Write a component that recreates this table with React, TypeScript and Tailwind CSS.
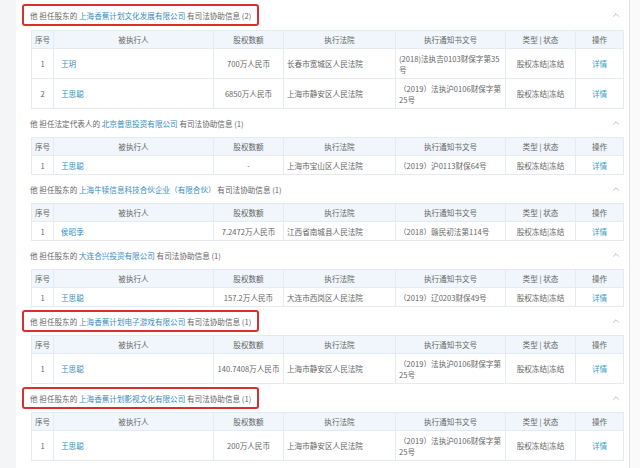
import { ChevronUp } from "lucide-react"

interface Row {
  no: number
  person: string
  amount: string
  court: string
  doc: string
  status: string
}

interface Section {
  role: string
  company: string
  count: number
  marked?: boolean
  rows: Row[]
}

const sections: Section[] = [
  {
    role: "他 担任股东的",
    company: "上海香蕉计划文化发展有限公司",
    count: 2,
    marked: true,
    rows: [
      { no: 1, person: "王玥", amount: "700万人民币", court: "长春市宽城区人民法院", doc: "(2018)法执吉0103财保字第35号", status: "股权冻结|冻结" },
      { no: 2, person: "王思聪", amount: "6850万人民币", court: "上海市静安区人民法院", doc: "（2019）法执沪0106财保字第25号", status: "股权冻结|冻结" },
    ],
  },
  {
    role: "他 担任法定代表人的",
    company: "北京普思投资有限公司",
    count: 1,
    rows: [
      { no: 1, person: "王思聪", amount: "-", court: "上海市宝山区人民法院", doc: "（2019）沪0113财保64号", status: "股权冻结|冻结" },
    ],
  },
  {
    role: "他 担任股东的",
    company: "上海牛犊信息科技合伙企业（有限合伙）",
    count: 1,
    rows: [
      { no: 1, person: "侯昭季", amount: "7.2472万人民币", court: "江西省南城县人民法院", doc: "（2018）赣民初法第114号", status: "股权冻结|冻结" },
    ],
  },
  {
    role: "他 担任股东的",
    company: "大连合兴投资有限公司",
    count: 1,
    rows: [
      { no: 1, person: "王思聪", amount: "157.2万人民币", court: "大连市西岗区人民法院", doc: "（2019）辽0203财保49号", status: "股权冻结|冻结" },
    ],
  },
  {
    role: "他 担任股东的",
    company: "上海香蕉计划电子游戏有限公司",
    count: 1,
    marked: true,
    rows: [
      { no: 1, person: "王思聪", amount: "140.7408万人民币", court: "上海市静安区人民法院", doc: "（2019）法执沪0106财保字第25号", status: "股权冻结|冻结" },
    ],
  },
  {
    role: "他 担任股东的",
    company: "上海香蕉计划影视文化有限公司",
    count: 1,
    marked: true,
    rows: [
      { no: 1, person: "王思聪", amount: "200万人民币", court: "上海市静安区人民法院", doc: "（2019）法执沪0106财保字第25号", status: "股权冻结|冻结" },
    ],
  },
]

function SectionTable({ section, first }: { section: Section; first: boolean }) {
  return (
    <div>
      {/* Heading */}
      <div className={`flex items-center justify-between pl-[14px] pr-[8px] ${first ? "h-[30px]" : "h-[28px]"}`}>
        <span className="relative whitespace-nowrap text-[#666]">
          {section.role}{" "}
          <span className="text-[#3a8cc4]">{section.company}</span>{" "}
          有司法协助信息 ({section.count})
          {section.marked && (
            <span className="absolute -left-[8px] -right-[8px] -top-[6px] -bottom-[5px] rounded-[3px] border-2 border-[#d8302f]" />
          )}
        </span>
        <ChevronUp className="w-[10px] h-[10px] text-[#999]" strokeWidth={1.5} />
      </div>

      {/* Table */}
      <table className="ml-[15px] w-[592px] table-fixed border-collapse border border-[#e6ebf0]">
        <colgroup>
          <col className="w-[22px]" />
          <col className="w-[160px]" />
          <col className="w-[70px]" />
          <col className="w-[112px]" />
          <col className="w-[110px]" />
          <col className="w-[70px]" />
          <col className="w-[48px]" />
        </colgroup>
        <thead>
          <tr className="h-[18px] bg-[#f0f6fb] text-[#666]">
            <th className="font-normal border border-[#e6ebf0]">序号</th>
            <th className="font-normal border border-[#e6ebf0]">被执行人</th>
            <th className="font-normal border border-[#e6ebf0]">股权数额</th>
            <th className="font-normal border border-[#e6ebf0]">执行法院</th>
            <th className="font-normal border border-[#e6ebf0]">执行通知书文号</th>
            <th className="font-normal border border-[#e6ebf0]">类型 | 状态</th>
            <th className="font-normal border border-[#e6ebf0]">操作</th>
          </tr>
        </thead>
        <tbody>
          {section.rows.map((row) => {
            const tall = row.doc.length > 18
            return (
              <tr key={row.no} className={`${tall ? "h-[30px]" : "h-[19px]"} text-[#666]`}>
                <td className="border border-[#e6ebf0] text-center">{row.no}</td>
                <td className="border border-[#e6ebf0] pl-[7px] text-[#3a8cc4]">{row.person}</td>
                <td className="border border-[#e6ebf0] text-center">{row.amount}</td>
                <td className="border border-[#e6ebf0] pl-[3px]">{row.court}</td>
                <td className="border border-[#e6ebf0] pl-[3px] pr-[2px] leading-[11px]">{row.doc}</td>
                <td className="border border-[#e6ebf0] text-center">{row.status}</td>
                <td className="border border-[#e6ebf0] text-center text-[#3a9cc8]">详情</td>
              </tr>
            )
          })}
        </tbody>
      </table>
    </div>
  )
}

export default function App() {
  return (
    <div
      className="flex h-[468px] w-[640px] overflow-hidden bg-white text-[7.6px] leading-[11px]"
      style={{ fontFamily: '"Noto Sans CJK SC", "Liberation Sans", sans-serif' }}
    >
      <div className="w-[16px] shrink-0 bg-[#f4f5f7]" />
      <div className="w-[613px] shrink-0 bg-white">
        {sections.map((section, i) => (
          <SectionTable key={i} section={section} first={i === 0} />
        ))}
      </div>
      <div className="flex-1 border-l border-[#e2e2e2] bg-[#fafafa]" />
    </div>
  )
}
